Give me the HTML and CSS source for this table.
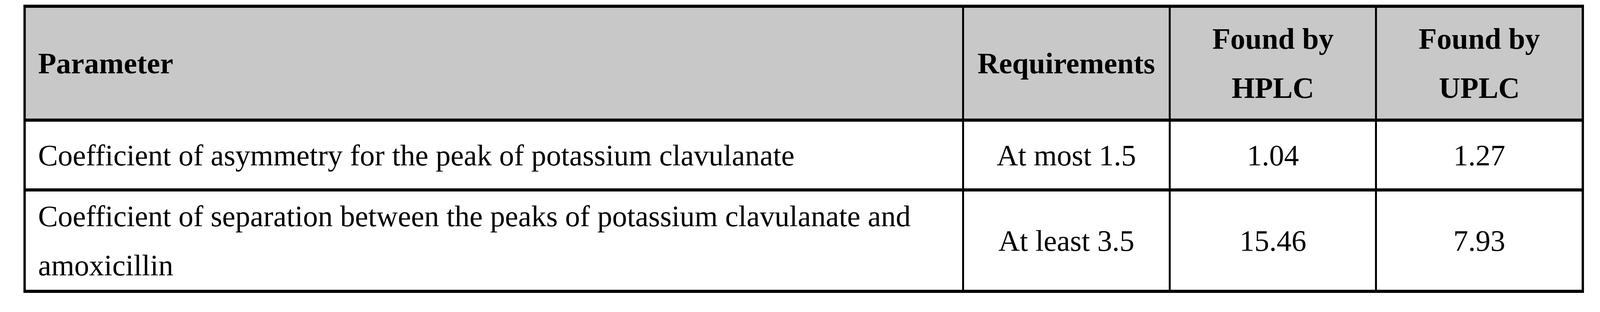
FILE: index.html
```html
<!DOCTYPE html>
<html lang="en">
<head>
<meta charset="utf-8">
<title>System suitability</title>
<link rel="stylesheet" href="styles.css">
</head>
<body>
<div class="table" role="table">
  <div class="cell head left" role="columnheader">Parameter</div>
  <div class="cell head center" role="columnheader">Requirements</div>
  <div class="cell head center" role="columnheader">Found by<br>HPLC</div>
  <div class="cell head center" role="columnheader">Found by<br>UPLC</div>

  <div class="cell left" role="cell">Coefficient of asymmetry for the peak of potassium clavulanate</div>
  <div class="cell center" role="cell">At most 1.5</div>
  <div class="cell center" role="cell">1.04</div>
  <div class="cell center" role="cell">1.27</div>

  <div class="cell left" role="cell">Coefficient of separation between the peaks of potassium clavulanate and amoxicillin</div>
  <div class="cell center" role="cell">At least 3.5</div>
  <div class="cell center" role="cell">15.46</div>
  <div class="cell center" role="cell">7.93</div>
</div>
</body>
</html>
```
FILE: styles.css
```css
/* Horizontal metrics are fractions of the 5550px-wide frame (1px = 0.018018vw);
   vertical metrics are in px of the 800px-high frame. */
html, body {
  margin: 0;
  padding: 0;
  background: #ffffff;
}

body {
  font-family: "Liberation Serif", "Times New Roman", serif;
  font-size: 1.856vw;
  line-height: 126px;
  color: #000000;
}

.table {
  box-sizing: border-box;
  display: grid;
  grid-template-columns: 3248fr 710fr 709fr 709fr;
  grid-template-rows: 284px 171px 252px;
  column-gap: 0.1261vw;
  row-gap: 8px;
  width: 97.53vw;
  margin: 12px 0 0 1.4595vw;
  padding: 8px 0.1441vw;
  background: #000000;
}

.cell {
  min-width: 0;
  background: #ffffff;
  display: flex;
  flex-direction: column;
  justify-content: center;
  white-space: normal;
}

.head {
  background: #c8c8c8;
  font-weight: bold;
}

.left {
  padding: 0 0.72vw 0 0.775vw;
  text-align: left;
}

.center {
  align-items: center;
  text-align: center;
}
```
